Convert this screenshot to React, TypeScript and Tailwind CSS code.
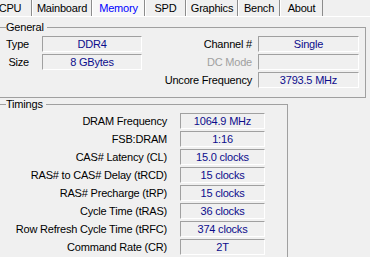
import React from 'react';

const tabs = [
  { name: 'CPU', cls: 'w-[44px]' },
  { name: 'Mainboard', cls: 'w-[60px]' },
  { name: 'Memory', cls: 'w-[53px] text-[#0000ff] bg-[#f7f7f7]' },
  { name: 'SPD', cls: 'w-[41px]' },
  { name: 'Graphics', cls: 'w-[52px]' },
  { name: 'Bench', cls: 'w-[42px]' },
  { name: 'About', cls: 'w-[43px]' },
];

const timings = [
  ['DRAM Frequency', '1064.9 MHz'],
  ['FSB:DRAM', '1:16'],
  ['CAS# Latency (CL)', '15.0 clocks'],
  ['RAS# to CAS# Delay (tRCD)', '15 clocks'],
  ['RAS# Precharge (tRP)', '15 clocks'],
  ['Cycle Time (tRAS)', '36 clocks'],
  ['Row Refresh Cycle Time (tRFC)', '374 clocks'],
  ['Command Rate (CR)', '2T'],
  ['', ''],
];

// sunken read-only field, like the win32 edit boxes
const Field: React.FC<{ value?: string; className?: string }> = ({ value, className = '' }) => (
  <div
    className={`h-[16px] flex items-center justify-center border-t border-l border-[#a0a0a0] border-b border-r border-b-white border-r-white text-[#0c0c8c] whitespace-nowrap ${className}`}
  >
    {value}
  </div>
);

const App: React.FC = () => {
  return (
    <div className="w-[370px] h-[257px] overflow-hidden bg-[#f0f0f0] text-black text-[11px] leading-[13px] tracking-[-0.2px] font-['Liberation_Sans',Arial,sans-serif]">
      {/* Tab strip */}
      <div className="flex h-[17px] -ml-[12px] border-b border-white">
        {tabs.map(t => (
          <div
            key={t.name}
            className={`h-full flex items-center justify-center border-l border-white border-r border-r-[#8c8c8c] ${t.cls}`}
          >
            {t.name}
          </div>
        ))}
      </div>

      {/* General */}
      <fieldset className="-ml-[6px] mr-[4px] mt-[4px] border border-[#a0a0a0] pl-[5px] pb-[9px] min-w-0">
        <legend className="ml-[6px] pr-[3px]">General</legend>
        <div className="flex flex-col gap-[2px] mt-[2px]">
          <div className="flex items-center">
            <span className="w-[29px] text-right">Type</span>
            <Field value="DDR4" className="ml-[13px] w-[100px]" />
            <span className="w-[110px] text-right">Channel #</span>
            <Field value="Single" className="ml-[6px] w-[101px]" />
          </div>
          <div className="flex items-center">
            <span className="w-[29px] text-right">Size</span>
            <Field value="8 GBytes" className="ml-[13px] w-[100px]" />
            <span className="w-[110px] text-right text-[#a0a0a0]">DC Mode</span>
            <Field className="ml-[6px] w-[101px]" />
          </div>
          <div className="flex items-center">
            <span className="w-[252px] text-right">Uncore Frequency</span>
            <Field value="3793.5 MHz" className="ml-[6px] w-[101px]" />
          </div>
        </div>
      </fieldset>

      {/* Timings */}
      <fieldset className="-ml-[6px] w-[294px] border border-[#a0a0a0] pl-[5px] min-w-0">
        <legend className="ml-[6px] pr-[3px]">Timings</legend>
        <div className="flex flex-col gap-[2px] mt-[2px]">
          {timings.map(([label, value], i) => (
            <div key={i} className="flex items-center">
              <span className="w-[167px] text-right whitespace-nowrap">{label}</span>
              <Field value={value} className="ml-[13px] w-[85px]" />
            </div>
          ))}
        </div>
      </fieldset>
    </div>
  );
};

export default App;
